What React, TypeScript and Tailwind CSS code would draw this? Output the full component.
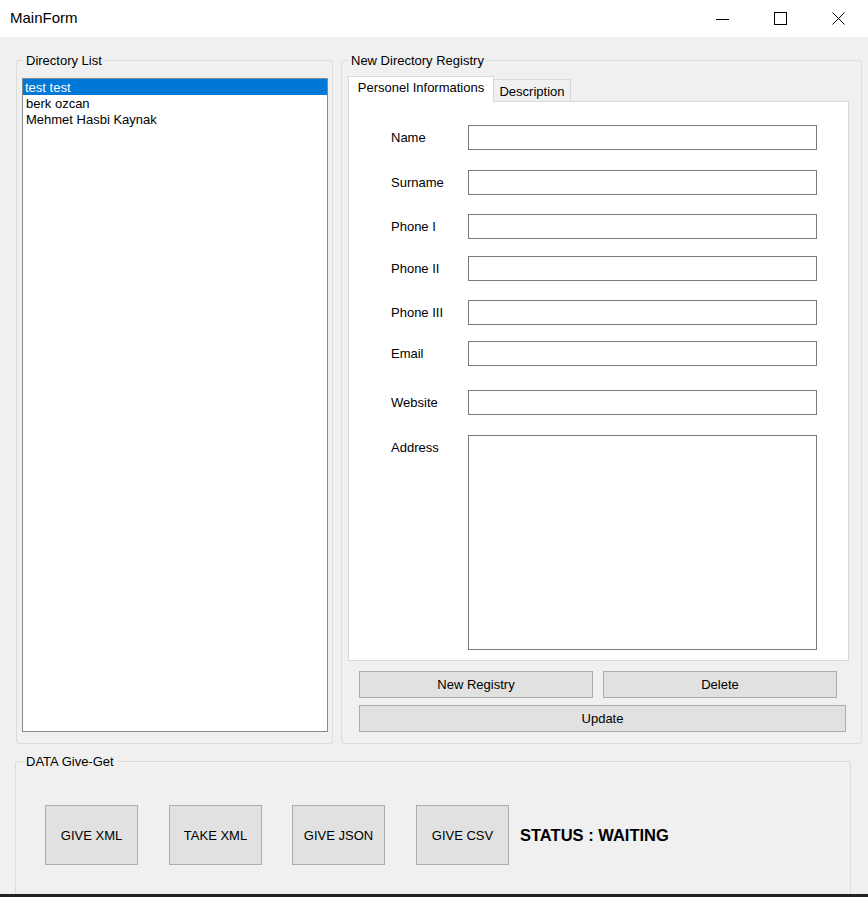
import React from "react";

const rows: { label: string; mt: string; tall?: boolean }[] = [
  { label: "Name", mt: "mt-0" },
  { label: "Surname", mt: "mt-[20px]" },
  { label: "Phone I", mt: "mt-[19px]" },
  { label: "Phone II", mt: "mt-[17px]" },
  { label: "Phone III", mt: "mt-[19px]" },
  { label: "Email", mt: "mt-[16px]" },
  { label: "Website", mt: "mt-[24px]" },
  { label: "Address", mt: "mt-[20px]", tall: true },
];

function WinBtn({ children, className }: { children: React.ReactNode; className: string }) {
  return (
    <button
      type="button"
      className={
        "flex items-center justify-center bg-[#e1e1e1] border border-[#adadad] text-[13px] leading-[15px] text-black " +
        className
      }
    >
      {children}
    </button>
  );
}

export default function App() {
  return (
    <div className="w-[868px] h-[897px] overflow-hidden bg-[#f0f0f0] flex flex-col text-black font-['Liberation_Sans',Arial,sans-serif]">
      {/* Title bar */}
      <div className="h-[37px] shrink-0 bg-white flex items-center">
        <span className="ml-[10px] text-[15px] leading-[17px] mt-[-2px]">MainForm</span>
        <div className="ml-auto mr-[1px] flex h-full">
          <div className="w-[58px] h-full flex items-center justify-center">
            <svg width="13" height="13" viewBox="0 0 13 13">
              <line x1="0" y1="7.5" x2="13" y2="7.5" stroke="#000" strokeWidth="1" />
            </svg>
          </div>
          <div className="w-[58px] h-full flex items-center justify-center">
            <svg width="13" height="13" viewBox="0 0 13 13">
              <rect x="0.5" y="0.5" width="12" height="12" fill="none" stroke="#000" strokeWidth="1" />
            </svg>
          </div>
          <div className="w-[58px] h-full flex items-center justify-center">
            <svg width="13" height="13" viewBox="0 0 13 13">
              <line x1="0.5" y1="0.5" x2="12.5" y2="12.5" stroke="#000" strokeWidth="1" />
              <line x1="12.5" y1="0.5" x2="0.5" y2="12.5" stroke="#000" strokeWidth="1" />
            </svg>
          </div>
        </div>
      </div>

      {/* Upper groups */}
      <div className="flex mt-[16px] ml-[16px] gap-[8px] shrink-0">
        {/* Directory List */}
        <fieldset className="m-0 w-[317px] h-[691px] border border-[#dcdcdc] rounded-[3px] px-[5px] pt-0 pb-0 min-w-0">
          <legend className="ml-[1px] px-[3px] text-[13px] leading-[15px]">Directory List</legend>
          <div className="mt-[10px] w-[306px] h-[654px] border border-[#828790] bg-white text-[13px]">
            <div className="h-[16px] bg-[#0078d7] text-white pl-[2px] pt-[1px] leading-[15px]">test test</div>
            <div className="h-[16px] pl-[3px] pt-[1px] leading-[15px]">berk ozcan</div>
            <div className="h-[16px] pl-[3px] pt-[1px] leading-[15px]">Mehmet Hasbi Kaynak</div>
          </div>
        </fieldset>

        {/* New Directory Registry */}
        <fieldset className="m-0 w-[521px] h-[691px] border border-[#dcdcdc] rounded-[3px] px-[6px] pt-0 pb-0 min-w-0">
          <legend className="px-[3px] text-[13px] leading-[15px]">New Directory Registry</legend>
          <div className="mt-[8px]">
            {/* tab strip */}
            <div className="relative z-10 flex items-end h-[25px] text-[13px] leading-[15px]">
              <div className="w-[146px] h-[26px] mb-[-1px] bg-white border border-b-0 border-[#d9d9d9] pt-[3px] text-center">
                Personel Informations
              </div>
              <div className="w-[77px] h-[22px] bg-[#f0f0f0] border-t border-r border-[#d9d9d9] pt-[4px] text-center">
                Description
              </div>
            </div>
            {/* tab page */}
            <div className="w-[501px] h-[560px] bg-white border border-[#d9d9d9] pt-[23px] pl-[42px]">
              {rows.map((r) => (
                <div key={r.label} className={"flex items-start " + r.mt}>
                  <div className="w-[77px] h-[25px] flex items-center text-[13px] leading-[15px]">{r.label}</div>
                  {r.tall ? (
                    <textarea className="w-[349px] h-[215px] border border-[#7a7a7a] bg-white resize-none outline-none" />
                  ) : (
                    <input type="text" className="w-[349px] h-[25px] border border-[#7a7a7a] bg-white outline-none" />
                  )}
                </div>
              ))}
            </div>
            {/* buttons */}
            <div className="mt-[10px] pl-[11px] flex gap-[10px]">
              <WinBtn className="w-[234px] h-[27px]">New Registry</WinBtn>
              <WinBtn className="w-[234px] h-[27px]">Delete</WinBtn>
            </div>
            <div className="mt-[7px] pl-[11px] flex">
              <WinBtn className="w-[487px] h-[27px]">Update</WinBtn>
            </div>
          </div>
        </fieldset>
      </div>

      {/* DATA Give-Get */}
      <fieldset className="m-0 mt-[10px] ml-[15px] w-[836px] h-[140px] shrink-0 border border-b-0 border-[#dcdcdc] rounded-t-[3px] p-0 min-w-0">
        <legend className="ml-[7px] px-[3px] text-[13px] leading-[15px]">DATA Give-Get</legend>
        <div className="mt-[36px] ml-[29px] flex items-center">
          <WinBtn className="w-[93px] h-[60px]">GIVE XML</WinBtn>
          <WinBtn className="ml-[31px] w-[93px] h-[60px]">TAKE XML</WinBtn>
          <WinBtn className="ml-[30px] w-[93px] h-[60px]">GIVE JSON</WinBtn>
          <WinBtn className="ml-[31px] w-[93px] h-[60px]">GIVE CSV</WinBtn>
          <span className="ml-[11px] text-[16.5px] leading-[18px] font-bold">STATUS : WAITING</span>
        </div>
      </fieldset>

      <div className="mt-auto h-[3px] shrink-0 bg-[#222222]" />
    </div>
  );
}
